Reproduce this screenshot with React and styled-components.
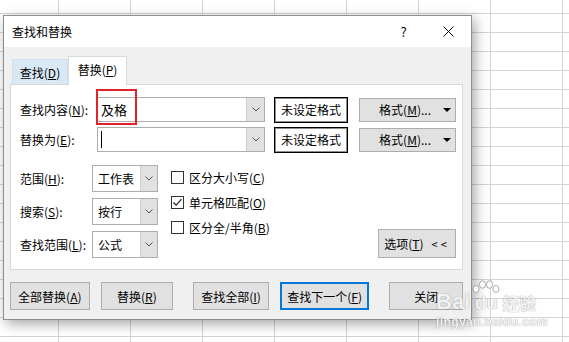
import styled, { createGlobalStyle } from 'styled-components'

const GlobalStyle = createGlobalStyle`
body {
  margin: 0;
  background: #fff;
  font-family: "Noto Sans CJK SC", "Noto Sans", sans-serif;
}
`

const Page = styled.div`
width: 569px;
height: 342px;
overflow: hidden;
position: relative;
box-sizing: border-box;
padding: 15px 0 0 3px;
background-color: #fff;
background-image:
  linear-gradient(to right, #d4d4d4 1px, transparent 1px),
  linear-gradient(to bottom, #d4d4d4 1px, transparent 1px);
background-size: 72px 19px;
background-position: 58px 13px;
`

const Dialog = styled.div`
width: 469px;
height: 305px;
box-sizing: border-box;
border: 1px solid #8e8e8e;
background: #f0f0f0;
box-shadow: 3px 4px 12px rgba(0, 0, 0, 0.35);
display: flex;
flex-direction: column;
font-size: 12px;
color: #000;
`

const TitleBar = styled.div`
height: 31px;
background: #fff;
display: flex;
align-items: center;
padding-left: 8px;
`

const Title = styled.div`
flex: 1;
font-size: 12px;
`

const WinButton = styled.div`
width: 45px;
height: 31px;
display: flex;
align-items: center;
justify-content: center;
font-size: 13px;
`

const Body = styled.div`
flex: 1;
padding: 9px 8px 0 6px;
display: flex;
flex-direction: column;
`

const Tabs = styled.div`
display: flex;
align-items: flex-end;
height: 28px;
margin-left: 2px;
`

const Tab = styled.div`
box-sizing: border-box;
width: ${p => p.$width}px;
height: ${p => (p.$active ? 29 : 25)}px;
display: flex;
align-items: center;
justify-content: center;
padding-bottom: ${p => (p.$active ? 3 : 0)}px;
background: ${p => (p.$active ? '#fff' : '#d9e8f5')};
border: 1px solid ${p => (p.$active ? '#d9d9d9' : '#d3dfeb')};
border-bottom: none;
margin-bottom: ${p => (p.$active ? -1 : 0)}px;
position: relative;
z-index: 1;
`

const Panel = styled.div`
background: #fff;
border: 1px solid #d9d9d9;
padding: 12px 6px 11px 9px;
display: flex;
flex-direction: column;
`

const FieldRow = styled.div`
display: flex;
align-items: center;
height: 25px;
margin-top: ${p => p.$top || 0}px;
`

const Label = styled.div`
width: ${p => p.$width}px;
flex-shrink: 0;
white-space: nowrap;
`

const Combo = styled.div`
position: relative;
box-sizing: border-box;
width: ${p => p.$width}px;
height: ${p => p.$height}px;
border: 1px solid #adadad;
background: #fff;
display: flex;
align-items: stretch;
`

const ComboText = styled.div`
flex: 1;
display: flex;
align-items: center;
padding-left: ${p => p.$pad || 4}px;
font-size: ${p => p.$size || 12}px;
`

const Caret = styled.div`
width: 1px;
height: 17px;
background: #000;
`

const DropPart = styled.div`
width: ${p => p.$width}px;
background: #e1e1e1;
border-left: 1px solid #cfcfcf;
display: flex;
align-items: center;
justify-content: center;
`

const Highlight = styled.div`
position: absolute;
left: -2px;
top: -9px;
width: 41px;
height: 36px;
box-sizing: border-box;
border: 2px solid #e3232c;
pointer-events: none;
`

const FormatStatus = styled.div`
box-sizing: border-box;
width: 74px;
height: 26px;
margin-left: 9px;
border: 1px solid #000;
box-shadow: inset 0 0 0 1px rgba(0, 0, 0, 0.45);
display: flex;
align-items: center;
justify-content: center;
`

const FormatButton = styled.div`
box-sizing: border-box;
width: 97px;
height: 24px;
margin-left: 11px;
background: #e1e1e1;
border: 1px solid #adadad;
display: flex;
align-items: center;
justify-content: flex-end;
padding-right: 4px;
gap: 12px;
white-space: nowrap;
`

const Triangle = styled.span`
width: 0;
height: 0;
border-left: 4px solid transparent;
border-right: 4px solid transparent;
border-top: 4px solid #000;
`

const Lower = styled.div`
display: flex;
margin-top: 13px;
`

const SelectCol = styled.div`
display: flex;
flex-direction: column;
gap: 6px;
`

const SelectRow = styled.div`
display: flex;
align-items: center;
`

const CheckCol = styled.div`
display: flex;
flex-direction: column;
margin-left: 13px;
`

const CheckRow = styled.div`
display: flex;
align-items: center;
height: 25px;
`

const Box = styled.div`
box-sizing: border-box;
width: 13px;
height: 13px;
border: 1px solid #333;
background: #fff;
margin-right: 5px;
display: flex;
align-items: center;
justify-content: center;
`

const Button = styled.div`
box-sizing: border-box;
width: ${p => p.$width}px;
height: ${p => p.$height || 28}px;
margin-left: ${p => p.$gap || 0}px;
background: #e1e1e1;
border: ${p => (p.$primary ? '2px solid #0078d7' : '1px solid #adadad')};
display: flex;
align-items: center;
justify-content: center;
white-space: nowrap;
`

const OptionsButton = styled(Button)`
margin-left: auto;
align-self: flex-end;
gap: 8px;
`

const Arrows = styled.span`
font-size: 11px;
letter-spacing: 3px;
`

const ButtonRow = styled.div`
display: flex;
margin-top: 12px;
`

const Watermark = styled.div`
position: absolute;
left: 436px;
top: 280px;
color: rgba(255, 255, 255, 0.92);
text-shadow: 0 0 1px rgba(0, 0, 0, 0.5);
font-family: "Liberation Sans", Arial, sans-serif;
pointer-events: none;
`

const MarkTop = styled.div`
display: flex;
align-items: flex-end;
height: 33px;
`

const Bai = styled.span`
font-size: 22px;
font-weight: bold;
line-height: 22px;
`

const Paw = styled.div`
display: flex;
flex-direction: column;
align-items: center;
margin-left: 2px;
`

const Du = styled.span`
font-size: 19px;
font-weight: bold;
line-height: 20px;
`

const Jingyan = styled.span`
font-family: "Noto Sans CJK SC", sans-serif;
font-size: 17px;
font-weight: bold;
line-height: 21px;
margin-left: 2px;
`

const Url = styled.div`
font-size: 12px;
font-weight: bold;
line-height: 12px;
margin-top: 3px;
letter-spacing: 0.4px;
`

const Chevron = () => (
  <svg width="8" height="5" viewBox="0 0 8 5">
    <polyline points="0.5,0.5 4,4 7.5,0.5" fill="none" stroke="#555" strokeWidth="1" />
  </svg>
)

const Close = () => (
  <svg width="11" height="11" viewBox="0 0 11 11">
    <path d="M0.5 0.5 L10.5 10.5 M10.5 0.5 L0.5 10.5" stroke="#000" strokeWidth="1" />
  </svg>
)

const Check = () => (
  <svg width="11" height="11" viewBox="0 0 11 11">
    <polyline points="1.5,5.5 4.2,8.2 9.5,2.2" fill="none" stroke="#222" strokeWidth="1.2" />
  </svg>
)

const PawToes = () => (
  <svg width="28" height="13" viewBox="0 0 28 13">
    <g fill="rgba(255,255,255,0.92)" stroke="rgba(120,120,120,0.6)" strokeWidth="1">
      <ellipse cx="4" cy="9" rx="3" ry="3.5" />
      <ellipse cx="10.5" cy="4.5" rx="3" ry="3.8" />
      <ellipse cx="17.5" cy="4.5" rx="3" ry="3.8" />
      <ellipse cx="24" cy="9" rx="3" ry="3.5" />
    </g>
  </svg>
)

const ComboField = ({ text, width, highlight, caret }) => (
  <Combo $width={width} $height={25}>
    <ComboText $size={13} $pad={3}>{caret ? <Caret /> : text}</ComboText>
    <DropPart $width={17}><Chevron /></DropPart>
    {highlight && <Highlight />}
  </Combo>
)

const SelectField = ({ label, value }) => (
  <SelectRow>
    <Label $width={72}>{label}</Label>
    <Combo $width={66} $height={27}>
      <ComboText $pad={5}>{value}</ComboText>
      <DropPart $width={16}><Chevron /></DropPart>
    </Combo>
  </SelectRow>
)

const Option = ({ checked, children }) => (
  <CheckRow>
    <Box>{checked && <Check />}</Box>
    <span>{children}</span>
  </CheckRow>
)

const FormatMenu = () => (
  <FormatButton>
    <span>格式(<u>M</u>)...</span>
    <Triangle />
  </FormatButton>
)

const App = () => {
  return (
    <Page>
      <GlobalStyle />
      <Dialog>
        <TitleBar>
          <Title>查找和替换</Title>
          <WinButton>?</WinButton>
          <WinButton><Close /></WinButton>
        </TitleBar>
        <Body>
          <Tabs>
            <Tab $width={56}>查找(<u>D</u>)</Tab>
            <Tab $width={59} $active>替换(<u>P</u>)</Tab>
          </Tabs>
          <Panel>
            <FieldRow>
              <Label $width={77}>查找内容(<u>N</u>):</Label>
              <ComboField text="及格" width={168} highlight />
              <FormatStatus>未设定格式</FormatStatus>
              <FormatMenu />
            </FieldRow>
            <FieldRow $top={5}>
              <Label $width={77}>替换为(<u>E</u>):</Label>
              <ComboField width={168} caret />
              <FormatStatus>未设定格式</FormatStatus>
              <FormatMenu />
            </FieldRow>
            <Lower>
              <SelectCol>
                <SelectField label={<>范围(<u>H</u>):</>} value="工作表" />
                <SelectField label={<>搜索(<u>S</u>):</>} value="按行" />
                <SelectField label={<>查找范围(<u>L</u>):</>} value="公式" />
              </SelectCol>
              <CheckCol>
                <Option>区分大小写(<u>C</u>)</Option>
                <Option checked>单元格匹配(<u>O</u>)</Option>
                <Option>区分全/半角(<u>B</u>)</Option>
              </CheckCol>
              <OptionsButton $width={78} $height={29}>
                <span>选项(<u>T</u>)</span>
                <Arrows>&lt;&lt;</Arrows>
              </OptionsButton>
            </Lower>
          </Panel>
          <ButtonRow>
            <Button $width={80}>全部替换(<u>A</u>)</Button>
            <Button $width={73} $gap={11}>替换(<u>R</u>)</Button>
            <Button $width={76} $gap={20}>查找全部(<u>I</u>)</Button>
            <Button $width={90} $gap={11} $primary>查找下一个(<u>F</u>)</Button>
            <Button $width={74} $gap={20}>关闭</Button>
          </ButtonRow>
        </Body>
      </Dialog>
      <Watermark>
        <MarkTop>
          <Bai>Bai</Bai>
          <Paw>
            <PawToes />
            <Du>du</Du>
          </Paw>
          <Jingyan>经验</Jingyan>
        </MarkTop>
        <Url>jingyan.baidu.com</Url>
      </Watermark>
    </Page>
  )
}

export default App
